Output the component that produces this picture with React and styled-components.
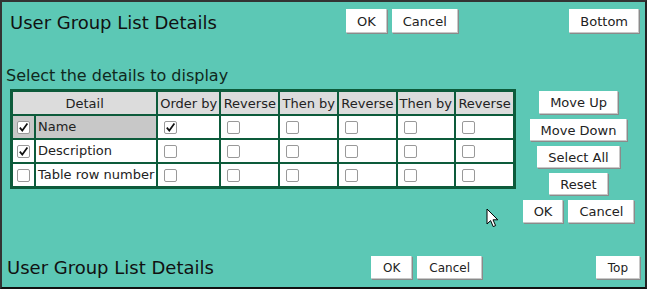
import React from 'react';
import styled, { createGlobalStyle } from 'styled-components';

const GlobalStyle = createGlobalStyle`
  body {
    margin: 0;
    font-family: "DejaVu Sans", "Liberation Sans", sans-serif;
  }
`;

const colWidths = [21, 118, 60, 57, 57, 56, 56, 57];
const sortHeads = ['Order by', 'Reverse', 'Then by', 'Reverse', 'Then by', 'Reverse'];

const rows = [
    { label: 'Name', shown: true, sort: [true, false, false, false, false, false], selected: true },
    { label: 'Description', shown: true, sort: [false, false, false, false, false, false] },
    { label: 'Table row number', shown: false, sort: [false, false, false, false, false, false] },
];

function Check({ checked, flush }) {
    return (
        <Box $flush={flush}>
            {checked && (
                <svg width="11" height="11" viewBox="0 0 11 11">
                    <path d="M1.8 5.6 L4.3 8.6 L9.4 1.6" fill="none" stroke="#111" strokeWidth="1.7" />
                </svg>
            )}
        </Box>
    );
}

function Bar({ split, left, right, small, last }) {
    return (
        <BarRow $split={split} $left={left} $right={right} $last={last}>
            <Title $last={last}>User Group List Details</Title>
            <ButtonGroup>
                <Button $small={small} $h={last ? 23 : 24}>OK</Button>
                <Button $small={small} $h={last ? 23 : 24}>Cancel</Button>
            </ButtonGroup>
            <span />
            <Button $small={small} $h={last ? 23 : 24}>{last ? 'Top' : 'Bottom'}</Button>
        </BarRow>
    );
}

export default function App() {
    return (
        <Page>
            <GlobalStyle />
            <Bar split={336} left={8} right={6} />

            <Heading>Select the details to display</Heading>

            <Middle>
                <Grid>
                    <colgroup>
                        {colWidths.map((w, i) => (
                            <Col key={i} $w={w} />
                        ))}
                    </colgroup>
                    <thead>
                        <tr>
                            <HeadCell colSpan={2}>Detail</HeadCell>
                            {sortHeads.map((h, i) => (
                                <HeadCell key={i}>{h}</HeadCell>
                            ))}
                        </tr>
                    </thead>
                    <tbody>
                        {rows.map((r) => (
                            <tr key={r.label}>
                                <Cell $center $selected={r.selected}>
                                    <Check checked={r.shown} flush />
                                </Cell>
                                <Cell $selected={r.selected}>{r.label}</Cell>
                                {r.sort.map((s, i) => (
                                    <Cell key={i}>
                                        <Check checked={s} />
                                    </Cell>
                                ))}
                            </tr>
                        ))}
                    </tbody>
                </Grid>

                <Side>
                    <Button $h={23}>Move Up</Button>
                    <Button $h={22}>Move Down</Button>
                    <Button $h={22}>Select All</Button>
                    <Button $h={22}>Reset</Button>
                    <ButtonGroup>
                        <Button $h={23}>OK</Button>
                        <Button $h={23}>Cancel</Button>
                    </ButtonGroup>
                </Side>
            </Middle>

            <Bar split={364} left={5} right={5} small last />

            <Pointer width="13" height="20" viewBox="0 0 13 20">
                <path
                    d="M1 1 L1 16 L4.6 12.6 L7.2 18.6 L9.6 17.6 L7 11.8 L11.8 11.8 Z"
                    fill="#fff"
                    stroke="#000"
                    strokeWidth="1"
                    strokeLinejoin="round"
                />
            </Pointer>
        </Page>
    );
}

const Page = styled.div`
    position: relative;
    width: 647px;
    height: 289px;
    box-sizing: border-box;
    border: 2px solid #333;
    border-right-color: #222;
    border-bottom-color: #111;
    background-color: #5cc8b5;
    display: flex;
    flex-direction: column;
    color: #111;
`;

const BarRow = styled.div`
    display: grid;
    grid-template-columns: ${(p) => p.$split}px auto 1fr auto;
    align-items: ${(p) => (p.$last ? 'end' : 'start')};
    padding: ${(p) => (p.$last ? '0' : '7px')} ${(p) => p.$right}px ${(p) => (p.$last ? '8px' : '0')} ${(p) => p.$left}px;
    margin-top: ${(p) => (p.$last ? 'auto' : '0')};
`;

const Title = styled.h1`
    margin: ${(p) => (p.$last ? '0' : '2px 0 0')};
    font-size: 18px;
    font-weight: normal;
    line-height: ${(p) => (p.$last ? 22 : 24)}px;
    white-space: nowrap;
`;

const ButtonGroup = styled.div`
    display: flex;
    gap: 5px;
`;

const Button = styled.button`
    height: ${(p) => p.$h || 24}px;
    padding: 0 ${(p) => (p.$small ? 12 : 11)}px;
    font-family: "DejaVu Sans", sans-serif;
    font-size: ${(p) => (p.$small ? 12 : 13)}px;
    color: #222;
    background-color: #fff;
    border: 0;
    border-radius: 0;
    box-shadow: 1px 1px 0 #8a8a8a, inset -1px -1px 0 #c8c8c8;
    white-space: nowrap;
    cursor: pointer;
`;

const Heading = styled.h2`
    margin: 31px 0 0 4px;
    font-size: 16px;
    font-weight: normal;
    line-height: 20px;
    color: #102820;
`;

const Middle = styled.div`
    display: flex;
    align-items: flex-start;
    margin-top: 3px;
    padding-left: 8px;
`;

const Grid = styled.table`
    table-layout: fixed;
    border-collapse: separate;
    border-spacing: 2px;
    border: 1px solid #0d5b3b;
    background-color: #0d5b3b;
    font-size: 13px;
    color: #222;
`;

const Col = styled.col`
    width: ${(p) => p.$w}px;
`;

const HeadCell = styled.th`
    height: 22px;
    padding: 0 2px;
    background-color: #dcdcdc;
    font-weight: normal;
    text-align: center;
    white-space: nowrap;
`;

const Cell = styled.td`
    height: 22px;
    padding: 0 2px;
    background-color: ${(p) => (p.$selected ? '#c8c8c8' : '#fff')};
    text-align: ${(p) => (p.$center ? 'center' : 'left')};
    white-space: nowrap;
    line-height: 16px;
`;

const Box = styled.span`
    display: inline-flex;
    align-items: center;
    justify-content: center;
    vertical-align: middle;
    width: 13px;
    height: 13px;
    box-sizing: border-box;
    margin-left: ${(p) => (p.$flush ? 0 : 4)}px;
    border: 1px solid #999;
    border-radius: 2px;
    background-color: #fff;
`;

const Side = styled.div`
    flex: 1;
    display: flex;
    flex-direction: column;
    align-items: center;
    gap: 5px;
    padding: 2px 4px 0 0;
`;

const Pointer = styled.svg`
    position: absolute;
    left: 484px;
    top: 206px;
`;
